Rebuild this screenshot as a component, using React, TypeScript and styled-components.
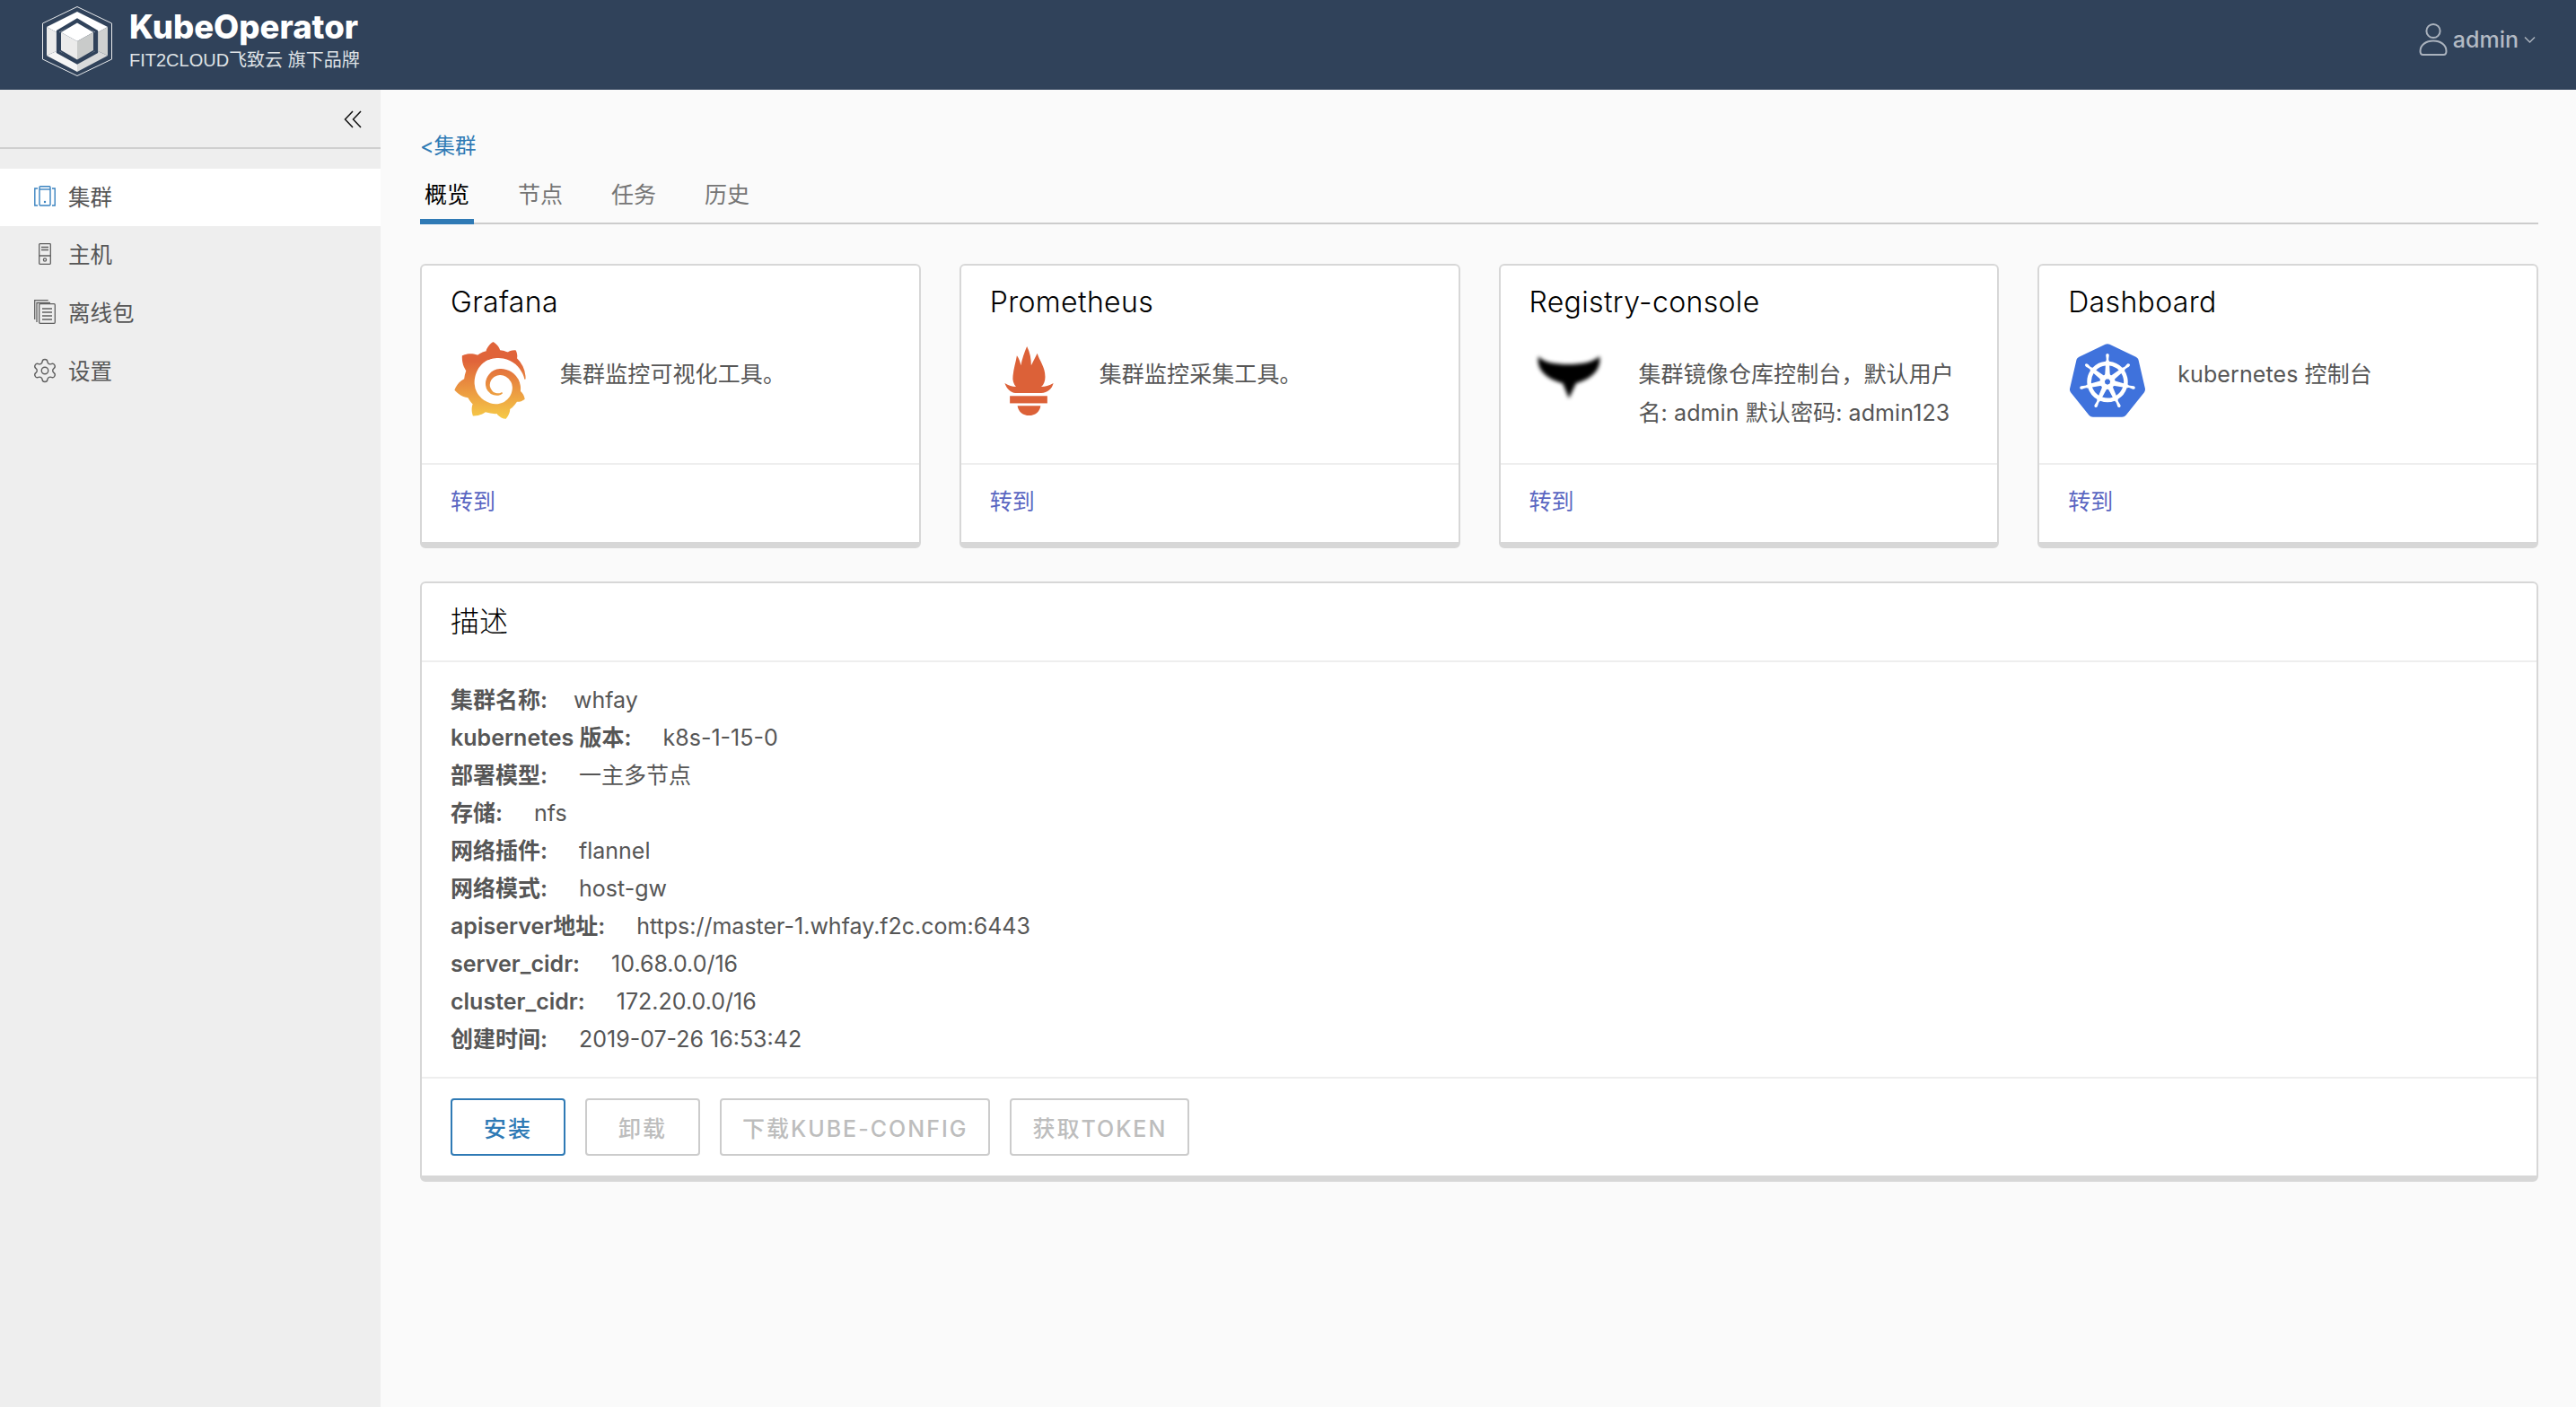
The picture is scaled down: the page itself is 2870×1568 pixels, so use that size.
import React from "react";
import styled, { createGlobalStyle } from "styled-components";
import { SiGrafana, SiKubernetes } from "react-icons/si";
import { Settings } from "lucide-react";

const FONT = `Inter, "Noto Sans CJK SC", sans-serif`;

const Global = createGlobalStyle`
  html, body { margin: 0; padding: 0; height: 100%; overflow: hidden; }
  body { font-family: ${FONT}; font-size: 25px; color: #565656; background: #fafafa; }
  * { box-sizing: border-box; }
`;

const Page = styled.div`
  display: flex;
  flex-direction: column;
  height: 1568px;
`;
const Header = styled.header`
  flex: 0 0 100px;
  background: #30425a;
  display: flex;
  align-items: center;
  justify-content: space-between;
  padding: 0 45px 0 45px;
`;
const Brand = styled.div`
  display: flex;
  align-items: center;
  gap: 17px;
  padding-bottom: 8px;
`;
const BrandText = styled.div`
  display: flex;
  flex-direction: column;
  margin-top: -2px;
`;
const BrandName = styled.div`
  font-size: 36.5px;
  font-weight: 800;
  line-height: 44px;
  margin: -3px 0 3px;
  color: #fff;
`;
const BrandSub = styled.div`
  font-family: "Liberation Sans", "Noto Sans CJK SC", sans-serif;
  font-size: 20px;
  line-height: 24px;
  color: #dfe2e6;
  white-space: nowrap;
`;
const UserMenu = styled.div`
  display: flex;
  align-items: center;
  color: #b3bac4;
  font-size: 25px;
  font-weight: 500;
  gap: 6px;
  padding-bottom: 12px;
`;
const Body = styled.div`
  flex: 1;
  display: flex;
  min-height: 0;
`;
const Sidebar = styled.aside`
  flex: 0 0 424px;
  background: #eeeeee;
`;
const CollapseRow = styled.div`
  height: 66px;
  border-bottom: 2px solid #cfcfcf;
  display: flex;
  justify-content: flex-end;
  padding: 23px 21px 0 0;
  margin-bottom: 22px;
`;
const NavItem = styled.div<{ $active?: boolean }>`
  height: ${(p) => (p.$active ? "64px" : "65px")};
  padding: 0 0 4px 38px;
  display: flex;
  align-items: center;
  gap: 14px;
  background: ${(p) => (p.$active ? "#fff" : "transparent")};
  color: #565656;
  font-size: 24.5px;
`;
const NavIcon = styled.span`
  width: 24px;
  height: 28px;
  display: flex;
  align-items: center;
  justify-content: center;
  & > svg {
    flex-shrink: 0;
  }
`;
const Main = styled.main`
  flex: 1;
  padding: 50px 42px 0 44px;
  background: #fafafa;
`;
const BackLink = styled.div`
  font-size: 23.5px;
  line-height: 26px;
  color: #2f7ab5;
`;
const Tabs = styled.div`
  display: flex;
  gap: 44px;
  margin-top: 18px;
  border-bottom: 2px solid #cccccc;
  height: 56px;
`;
const Tab = styled.div<{ $active?: boolean }>`
  width: 60px;
  height: 56px;
  text-align: center;
  line-height: 46px;
  font-size: 25px;
  color: ${(p) => (p.$active ? "#000" : "#757575")};
  border-bottom: ${(p) => (p.$active ? "6px solid #2f7ab5" : "none")};
`;
const CardGrid = styled.div`
  display: grid;
  grid-template-columns: repeat(4, 1fr);
  gap: 43px;
  margin-top: 44px;
`;
const Card = styled.section`
  background: #fff;
  border: 2px solid #d7d7d7;
  border-bottom-width: 7px;
  border-radius: 6px;
`;
const CardTitle = styled.h3`
  margin: 21px 0 23px 32px;
  font-size: 32px;
  font-weight: 300;
  letter-spacing: 0.35px;
  line-height: 40px;
  color: #000;
`;
const CardBody = styled.div`
  height: 136px;
  display: flex;
  padding-left: 32px;
`;
const LogoBox = styled.div`
  flex: 0 0 88px;
  height: 88px;
  display: flex;
  align-items: center;
  justify-content: center;
`;
const CardDesc = styled.div`
  margin-left: 34px;
  padding-top: 16px;
  width: 362px;
  font-size: 25px;
  letter-spacing: 0.1px;
  line-height: 42.5px;
  color: #565656;
`;
const CardFooter = styled.div`
  border-top: 2px solid #eeeeee;
  height: 88px;
  padding: 23px 0 0 32px;
  font-size: 25px;
  line-height: 36px;
  color: #5b67c2;
`;
const Panel = styled.section`
  margin-top: 37px;
  background: #fff;
  border: 2px solid #d7d7d7;
  border-bottom-width: 7px;
  border-radius: 6px;
`;
const PanelTitle = styled.h2`
  margin: 0;
  height: 88px;
  padding-left: 32px;
  border-bottom: 2px solid #eeeeee;
  font-size: 32px;
  font-weight: 300;
  line-height: 86px;
  color: #000;
`;
const InfoList = styled.div`
  padding: 21px 0 21px 32px;
  border-bottom: 2px solid #eeeeee;
`;
const InfoRow = styled.div<{ $tight?: boolean }>`
  display: flex;
  gap: ${(p) => (p.$tight ? "29px" : "35px")};
  height: 42px;
  line-height: 42px;
  font-size: 25px;
  color: #565656;
`;
const InfoLabel = styled.span`
  font-weight: 600;
`;
const Actions = styled.div`
  display: flex;
  gap: 22px;
  padding: 22px 0 22px 32px;
`;
const ActionButton = styled.button<{ $primary?: boolean }>`
  height: 64px;
  min-width: 128px;
  padding: 0 23px;
  background: transparent;
  border: 2px solid ${(p) => (p.$primary ? "#2f7ab5" : "#cccccc")};
  border-radius: 4px;
  font-family: ${FONT};
  font-size: 25px;
  font-weight: 500;
  letter-spacing: 2px;
  text-transform: uppercase;
  color: ${(p) => (p.$primary ? "#2f7ab5" : "#bdbdbd")};
`;

const CubeLogo = () => (
  <svg width="82" height="82" viewBox="15 5 82 82">
    <polygon points="56,7.5 94.5,26 94.5,66 56,84.5 17.5,66 17.5,26" fill="none" stroke="#e8eaec" strokeWidth="1" />
    <polygon points="56,13 90,30 77,37 56,22 35,37 22,30" fill="#fff" />
    <polygon points="90,30 90,62 77,56 77,37" fill="#cfd1d0" />
    <polygon points="22,30 22,62 35,56 35,37" fill="#ebebeb" />
    <polygon points="22,62 35,56 56,70 56,80" fill="#f5f5f5" />
    <polygon points="90,62 77,56 56,70 56,80" fill="#d9dada" />
    <polygon points="56,22 77.5,35 77.5,58 56,70 34.5,58 34.5,35" fill="none" stroke="#30425a" strokeWidth="3.2" />
    <polygon points="56,25.5 74,36 56,46 38,36" fill="#fff" />
    <polygon points="38,36 56,46 56,66.5 38,56" fill="#ebebeb" />
    <polygon points="74,36 56,46 56,66.5 74,56" fill="#c9cbca" />
  </svg>
);
const UserIcon = () => (
  <svg width="32" height="38" viewBox="0 0 32 38" fill="none" stroke="#aab2bd" strokeWidth="2">
    <circle cx="16" cy="9.5" r="7.6" />
    <path d="M1.5 32c0-7 6.5-11.5 14.5-11.5S30.5 25 30.5 32c0 2.5-1 4-3 4h-23c-2 0-3-1.5-3-4z" />
  </svg>
);
const Chevron = () => (
  <svg width="13" height="9" viewBox="0 0 13 9" fill="none" stroke="#aab2bd" strokeWidth="1.5">
    <polyline points="1,1.5 6.5,7 12,1.5" />
  </svg>
);
const CollapseIcon = () => (
  <svg width="20" height="20" viewBox="0 0 20 20" fill="none" stroke="#111" strokeWidth="1.5">
    <polyline points="10,1 1.5,10 10,19" />
    <polyline points="19,1 10.5,10 19,19" />
  </svg>
);
const DeviceIcon = () => (
  <svg width="24" height="23" viewBox="0 0 24 23" fill="none" stroke="#3a83c0" strokeWidth="1.4">
    <rect x="6" y="0.7" width="12" height="21.3" rx="1" />
    <line x1="6" y1="4" x2="18" y2="4" />
    <path d="M4 3H0.8V22H4M20 3h3.2V22H20" />
    <circle cx="12" cy="18" r="1.2" fill="#3a83c0" stroke="none" />
  </svg>
);
const ServerIcon = () => (
  <svg width="14" height="24" viewBox="0 0 14 24" fill="none" stroke="#606060" strokeWidth="1.3">
    <rect x="0.7" y="0.7" width="12.6" height="22.6" rx="0.8" />
    <path d="M3 4.5h8M3 7.5h8M0.7 14h12.6" />
    <circle cx="7" cy="18.5" r="1.6" />
  </svg>
);
const FilesIcon = () => (
  <svg width="24" height="27" viewBox="0 0 24 27" fill="none" stroke="#606060" strokeWidth="1.3">
    <rect x="5.7" y="4.7" width="17.6" height="21.6" rx="1" />
    <path d="M9 10h11M9 14h11M9 18h11M9 22h11" />
    <path d="M3 25V3.5h15M0.7 22V0.7h15" />
  </svg>
);
const FlameLogo = () => (
  <svg width="55" height="77" viewBox="85 45 160 227" fill="#dc6138">
    <path d="M158 45C168 65 172 85 172 108 178 95 186 80 192 68 198 90 218 112 218 145 218 158 214 170 205 178 218 178 232 174 245 166 240 185 226 198 205 198H120C105 198 92 185 85 166 98 174 110 178 122 178 114 168 110 156 112 142 114 118 122 95 125 75 132 85 136 95 138 108 142 85 150 65 158 45Z" />
    <rect x="102" y="208" width="123" height="24" />
    <path d="M127 240H203C200 260 185 272 165 272 145 272 130 260 127 240Z" />
  </svg>
);
const BirdLogo = () => (
  <svg width="88" height="70" viewBox="15 12 88 70" fill="#000">
    <defs>
      <filter id="birdBlur" x="-20%" y="-20%" width="140%" height="140%">
        <feGaussianBlur stdDeviation="2" />
      </filter>
    </defs>
    <path
      filter="url(#birdBlur)"
      d="M25 20C30 27 45 29 58 29 72 29 86 27 93 20 96 36 82 46 67 50L59 67 52 50C36 46 22 36 25 20Z"
    />
  </svg>
);
const GrafanaGradient = () => (
  <svg width="0" height="0" style={{ position: "absolute" }}>
    <defs>
      <linearGradient id="grafanaFill" x1="0" y1="0" x2="0" y2="1">
        <stop offset="0.25" stopColor="#e0643a" />
        <stop offset="1" stopColor="#f6cb48" />
      </linearGradient>
    </defs>
  </svg>
);

const cards = [
  { title: "Grafana", desc: "集群监控可视化工具。", logo: <SiGrafana size={86} fill="url(#grafanaFill)" /> },
  { title: "Prometheus", desc: "集群监控采集工具。", logo: <FlameLogo /> },
  { title: "Registry-console", desc: "集群镜像仓库控制台，默认用户名: admin 默认密码: admin123", logo: <BirdLogo /> },
  { title: "Dashboard", desc: "kubernetes 控制台", logo: <SiKubernetes size={84} color="#3f72dc" /> },
];

const info: [string, string, boolean?][] = [
  ["集群名称:", "whfay", true],
  ["kubernetes 版本:", "k8s-1-15-0"],
  ["部署模型:", "一主多节点"],
  ["存储:", "nfs"],
  ["网络插件:", "flannel"],
  ["网络模式:", "host-gw"],
  ["apiserver地址:", "https://master-1.whfay.f2c.com:6443"],
  ["server_cidr:", "10.68.0.0/16"],
  ["cluster_cidr:", "172.20.0.0/16"],
  ["创建时间:", "2019-07-26 16:53:42"],
];

export default function App() {
  return (
    <Page>
      <Global />
      <GrafanaGradient />
      <Header>
        <Brand>
          <CubeLogo />
          <BrandText>
            <BrandName>KubeOperator</BrandName>
            <BrandSub>FIT2CLOUD飞致云 旗下品牌</BrandSub>
          </BrandText>
        </Brand>
        <UserMenu>
          <UserIcon />
          <span>admin</span>
          <Chevron />
        </UserMenu>
      </Header>
      <Body>
        <Sidebar>
          <CollapseRow>
            <CollapseIcon />
          </CollapseRow>
          <NavItem $active>
            <NavIcon><DeviceIcon /></NavIcon>集群
          </NavItem>
          <NavItem>
            <NavIcon><ServerIcon /></NavIcon>主机
          </NavItem>
          <NavItem>
            <NavIcon><FilesIcon /></NavIcon>离线包
          </NavItem>
          <NavItem>
            <NavIcon><Settings size={30} strokeWidth={1.1} color="#606060" /></NavIcon>设置
          </NavItem>
        </Sidebar>
        <Main>
          <BackLink>&lt;集群</BackLink>
          <Tabs>
            <Tab $active>概览</Tab>
            <Tab>节点</Tab>
            <Tab>任务</Tab>
            <Tab>历史</Tab>
          </Tabs>
          <CardGrid>
            {cards.map((c) => (
              <Card key={c.title}>
                <CardTitle>{c.title}</CardTitle>
                <CardBody>
                  <LogoBox>{c.logo}</LogoBox>
                  <CardDesc>{c.desc}</CardDesc>
                </CardBody>
                <CardFooter>转到</CardFooter>
              </Card>
            ))}
          </CardGrid>
          <Panel>
            <PanelTitle>描述</PanelTitle>
            <InfoList>
              {info.map(([k, v, tight]) => (
                <InfoRow key={k} $tight={tight}>
                  <InfoLabel>{k}</InfoLabel>
                  <span>{v}</span>
                </InfoRow>
              ))}
            </InfoList>
            <Actions>
              <ActionButton $primary>安装</ActionButton>
              <ActionButton>卸载</ActionButton>
              <ActionButton>下载kube-config</ActionButton>
              <ActionButton>获取token</ActionButton>
            </Actions>
          </Panel>
        </Main>
      </Body>
    </Page>
  );
}
